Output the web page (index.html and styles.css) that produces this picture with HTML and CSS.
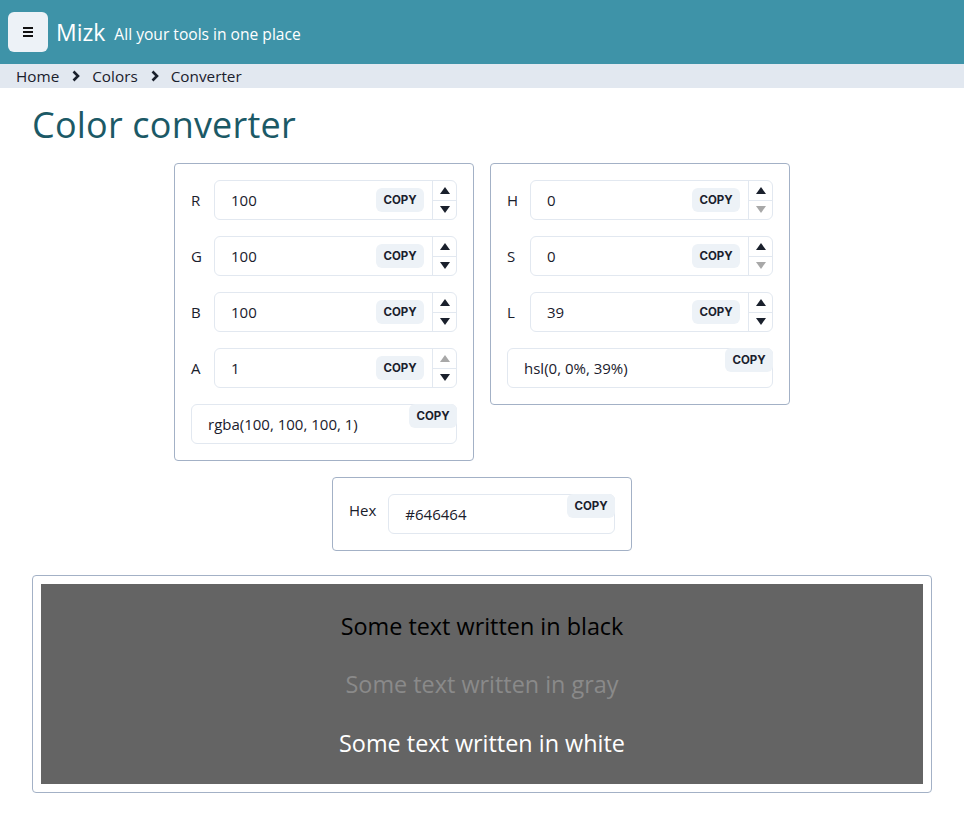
FILE: index.html
```html
<!DOCTYPE html>
<html lang="en">
<head>
<meta charset="utf-8">
<title>Color converter - Mizk</title>
<link rel="stylesheet" href="styles.css">
</head>
<body>
<header class="topbar">
  <button class="menu-btn" aria-label="Menu">
    <svg width="10" height="10" viewBox="0 0 10 10"><rect x="0" y="0" width="10" height="2" fill="#111"/><rect x="0" y="4" width="10" height="2" fill="#111"/><rect x="0" y="8" width="10" height="2" fill="#111"/></svg>
  </button>
  <span class="brand">Mizk</span>
  <span class="tagline">All your tools in one place</span>
</header>
<nav class="crumbs">
  <span>Home</span>
  <svg class="chev" width="8" height="12" viewBox="0 0 8 12"><path d="M1.5 1.5 L6 6 L1.5 10.5" fill="none" stroke="#1a202c" stroke-width="2.6"/></svg>
  <span>Colors</span>
  <svg class="chev" width="8" height="12" viewBox="0 0 8 12"><path d="M1.5 1.5 L6 6 L1.5 10.5" fill="none" stroke="#1a202c" stroke-width="2.6"/></svg>
  <span>Converter</span>
</nav>
<main class="page">
  <h1 class="title">Color converter</h1>
  <div class="cards">
    <section class="card">
      <div class="row"><span class="lbl">R</span><div class="field"><span class="val">100</span><span class="copy">COPY</span><span class="stepper"><span class="up"></span><span class="down"></span></span></div></div>
      <div class="row"><span class="lbl">G</span><div class="field"><span class="val">100</span><span class="copy">COPY</span><span class="stepper"><span class="up"></span><span class="down"></span></span></div></div>
      <div class="row"><span class="lbl">B</span><div class="field"><span class="val">100</span><span class="copy">COPY</span><span class="stepper"><span class="up"></span><span class="down"></span></span></div></div>
      <div class="row"><span class="lbl">A</span><div class="field"><span class="val">1</span><span class="copy">COPY</span><span class="stepper"><span class="up off"></span><span class="down"></span></span></div></div>
      <div class="field plain"><span class="val">rgba(100, 100, 100, 1)</span><span class="copy top">COPY</span></div>
    </section>
    <section class="card">
      <div class="row"><span class="lbl">H</span><div class="field"><span class="val">0</span><span class="copy">COPY</span><span class="stepper"><span class="up"></span><span class="down off"></span></span></div></div>
      <div class="row"><span class="lbl">S</span><div class="field"><span class="val">0</span><span class="copy">COPY</span><span class="stepper"><span class="up"></span><span class="down off"></span></span></div></div>
      <div class="row"><span class="lbl">L</span><div class="field"><span class="val">39</span><span class="copy">COPY</span><span class="stepper"><span class="up"></span><span class="down"></span></span></div></div>
      <div class="field plain"><span class="val">hsl(0, 0%, 39%)</span><span class="copy top">COPY</span></div>
    </section>
    <section class="card">
      <div class="row hexrow"><span class="lbl hexlbl">Hex</span><div class="field plain"><span class="val">#646464</span><span class="copy top">COPY</span></div></div>
    </section>
  </div>
  <div class="preview">
    <div class="swatch">
      <p class="sample black">Some text written in black</p>
      <p class="sample gray">Some text written in gray</p>
      <p class="sample white">Some text written in white</p>
    </div>
  </div>
</main>
</body>
</html>
```
FILE: styles.css
```css
* { box-sizing: border-box; }
html, body { margin: 0; padding: 0; }
body {
  font-family: "Open Sans", "Noto Sans", sans-serif;
  color: #1a202c;
  background: #fff;
  font-size: 16px;
}
.topbar {
  height: 64px;
  background: #3e93a8;
  display: flex;
  align-items: center;
  padding: 0 8px;
  color: #fff;
}
.menu-btn {
  width: 40px;
  height: 40px;
  border: none;
  border-radius: 6px;
  background: #edf2f7;
  display: flex;
  align-items: center;
  justify-content: center;
  padding: 0;
  margin-right: 8px;
}
.brand { font-size: 23px; line-height: 1; margin-right: 9px; }
.tagline { font-size: 15.6px; line-height: 1; padding-top: 5px; }
.crumbs {
  height: 24px;
  background: #e2e8f0;
  display: flex;
  align-items: center;
  padding: 0 16px;
  font-size: 15.3px;
  gap: 0;
}
.chev { margin: 0 12px 0 13px; }
.page { padding: 0 32px 32px; }
.title {
  margin: 15px 0 16px;
  font-size: 36px;
  font-weight: 400;
  line-height: 44px;
  color: #1b5966;
  letter-spacing: 0.2px;
}
.cards {
  display: flex;
  flex-wrap: wrap;
  justify-content: center;
  align-items: flex-start;
  gap: 16px;
}
.card {
  width: 300px;
  border: 1px solid #a3b1c6;
  border-radius: 4px;
  padding: 16px;
  display: flex;
  flex-direction: column;
  gap: 16px;
}
.row { display: flex; align-items: center; gap: 12px; }
.lbl { font-size: 15px; min-width: 11px; }
.hexlbl { margin-bottom: 8px; }
.field {
  flex: 1;
  height: 40px;
  border: 1px solid #e2e8f0;
  border-radius: 6px;
  display: flex;
  align-items: center;
  padding-left: 16px;
  font-size: 15px;
}
.card > .field { flex: none; }
.val { flex: 1; white-space: nowrap; }
.copy {
  width: 48px;
  height: 24px;
  border-radius: 6px;
  background: #edf2f7;
  font-family: Inter, "Noto Sans", sans-serif;
  font-weight: 700;
  font-size: 11.5px;
  display: flex;
  align-items: center;
  justify-content: center;
  margin-right: 8px;
  color: #1a202c;
}
.copy.top { align-self: flex-start; margin-top: -1px; margin-right: -1px; }
.stepper {
  width: 24px;
  height: 100%;
  border-left: 1px solid #e2e8f0;
  display: flex;
  flex-direction: column;
}
.stepper span {
  flex: 1;
  display: flex;
  align-items: center;
  justify-content: center;
}
.stepper .down { border-top: 1px solid #e2e8f0; }
.stepper span::before {
  content: "";
  width: 0;
  height: 0;
  border-left: 5.5px solid transparent;
  border-right: 5.5px solid transparent;
}
.stepper .up::before { border-bottom: 7px solid #1a202c; margin-top: 1px; }
.stepper .down::before { border-top: 7px solid #1a202c; }
.stepper .up.off::before { border-bottom-color: #a8a8a8; }
.stepper .down.off::before { border-top-color: #a8a8a8; }
.preview {
  margin-top: 24px;
  border: 1px solid #a3b1c6;
  border-radius: 4px;
  padding: 8px;
}
.swatch {
  height: 200px;
  background: #646464;
  display: flex;
  flex-direction: column;
  justify-content: space-evenly;
  align-items: center;
}
.sample {
  margin: 0;
  font-size: 23.4px;
  line-height: 34px;
}
.black { color: #000; }
.gray { color: #8a8a8a; }
.white { color: #fff; }
```
